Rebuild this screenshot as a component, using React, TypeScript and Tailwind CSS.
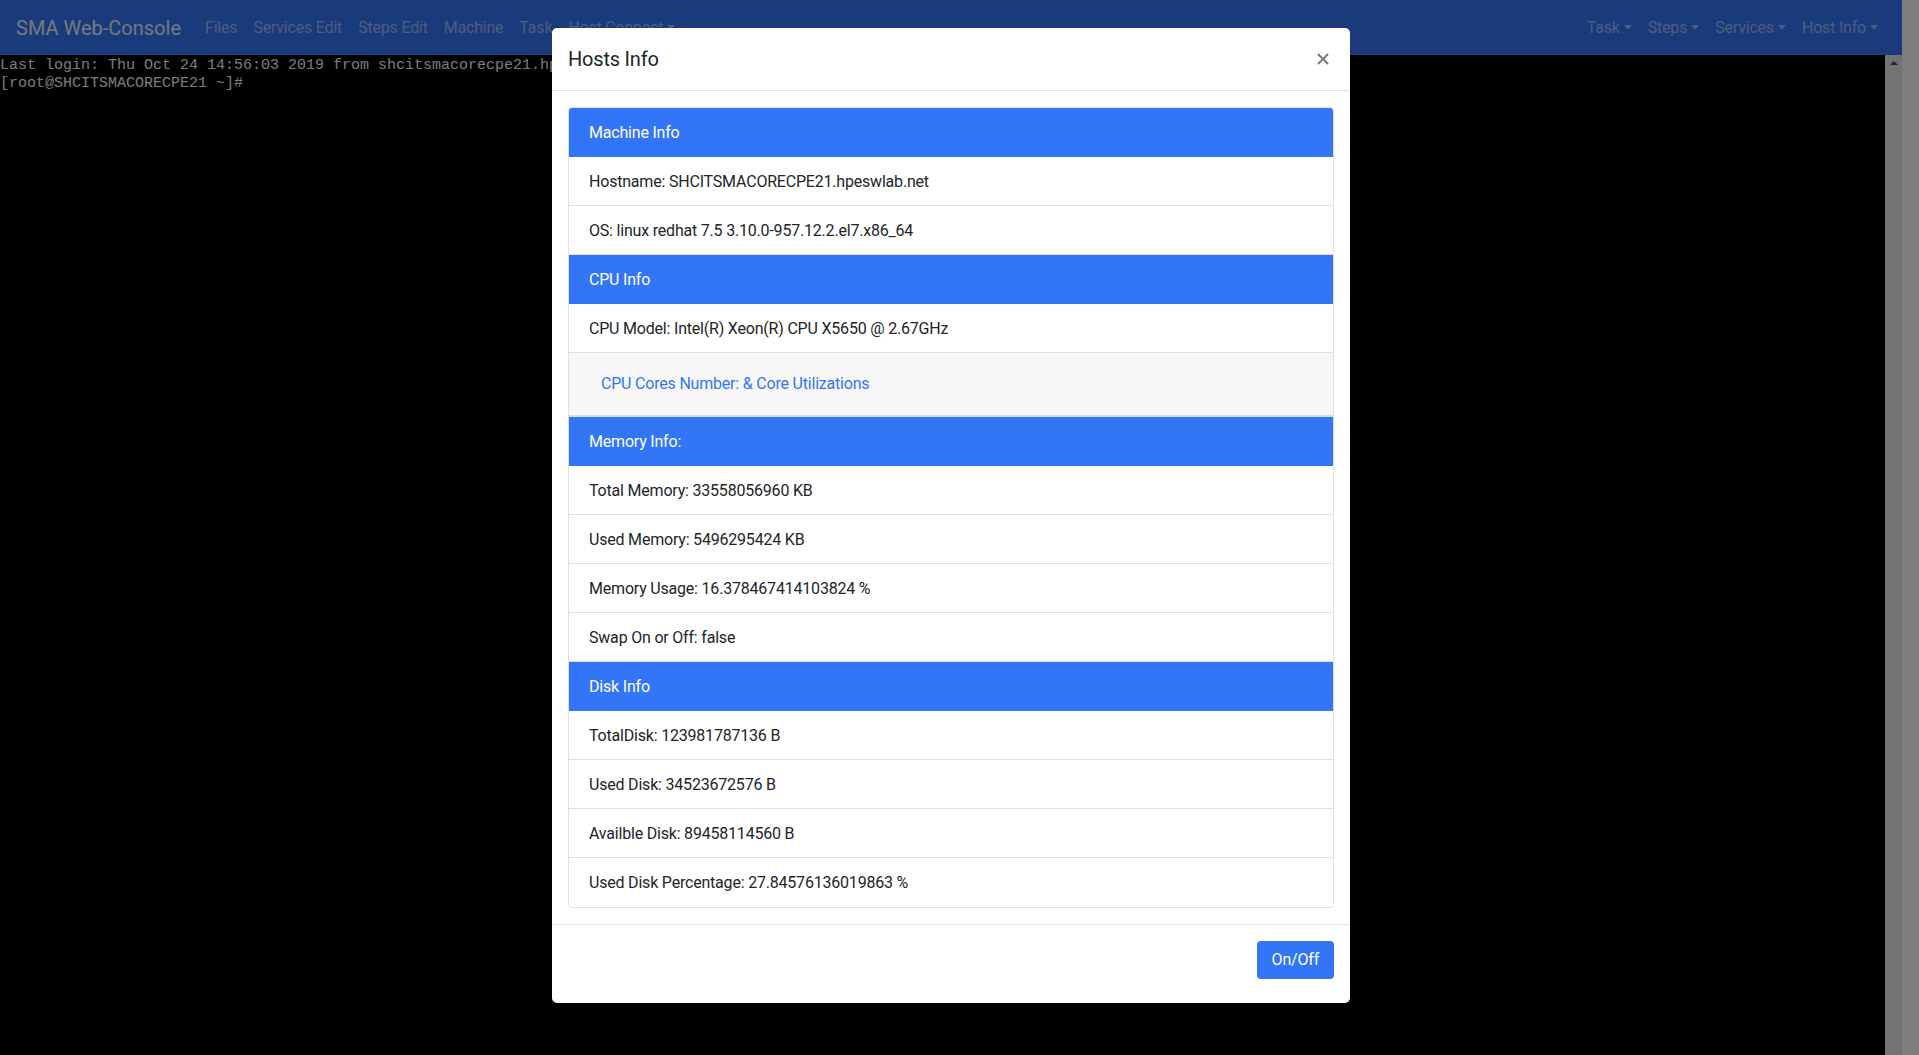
import React from 'react';
import { X } from 'lucide-react';

const leftLinks = ['Files', 'Services Edit', 'Steps Edit', 'Machine', 'Task'];
const rightMenus = ['Task', 'Steps', 'Services', 'Host Info'];

type Row = { text: string; head?: boolean; cores?: boolean };

const rows: Row[] = [
  { text: 'Machine Info', head: true },
  { text: 'Hostname: SHCITSMACORECPE21.hpeswlab.net' },
  { text: 'OS: linux redhat 7.5 3.10.0-957.12.2.el7.x86_64' },
  { text: 'CPU Info', head: true },
  { text: 'CPU Model: Intel(R) Xeon(R) CPU X5650 @ 2.67GHz' },
  { text: 'CPU Cores Number: & Core Utilizations', cores: true },
  { text: 'Memory Info:', head: true },
  { text: 'Total Memory: 33558056960 KB' },
  { text: 'Used Memory: 5496295424 KB' },
  { text: 'Memory Usage: 16.378467414103824 %' },
  { text: 'Swap On or Off: false' },
  { text: 'Disk Info', head: true },
  { text: 'TotalDisk: 123981787136 B' },
  { text: 'Used Disk: 34523672576 B' },
  { text: 'Availble Disk: 89458114560 B' },
  { text: 'Used Disk Percentage: 27.84576136019863 %' },
];

const Caret = () => (
  <span className="inline-block ml-[4px] align-[3px] border-t-[5px] border-x-[4px] border-x-transparent border-t-current" />
);

const App = () => {
  return (
    <div className="relative w-[1919px] h-[1055px] overflow-hidden bg-black flex font-['Segoe_UI',Roboto,'Noto_Sans',sans-serif] text-[16px] tracking-[-0.2px]">
      {/* page */}
      <div className="w-[1902px] h-full flex flex-col">
        <nav className="h-[55px] bg-[#3275f7] flex items-center px-[16px]">
          <span className="text-[20px] text-white/90 mr-[16px] leading-[30px] tracking-normal">SMA Web-Console</span>
          <div className="flex">
            {leftLinks.map((l) => (
              <span key={l} className="px-[8px] text-white/50 leading-[24px]">{l}</span>
            ))}
            <span className="px-[8px] text-white/50 leading-[24px]">Host Connect<Caret /></span>
          </div>
          <div className="ml-auto flex">
            {rightMenus.map((l) => (
              <span key={l} className="px-[8px] text-white/50 leading-[24px]">{l}<Caret /></span>
            ))}
          </div>
        </nav>
        <div className="flex-1 flex">
          <div className="flex-1 pt-[2px] font-['Liberation_Mono',monospace] tracking-normal text-[15px] leading-[18px] text-[#f5f5f5] whitespace-pre">
            <div>Last login: Thu Oct 24 14:56:03 2019 from shcitsmacorecpe21.hpeswlab.net</div>
            <div>[root@SHCITSMACORECPE21 ~]#</div>
          </div>
          <div className="w-[17px] bg-[#e6e6e6] flex justify-center pt-[6px]">
            <span className="border-b-[4px] border-x-[4px] border-x-transparent border-b-[#505050] h-0" />
          </div>
        </div>
      </div>
      <div className="w-[17px] h-full bg-[#fdfdfd]" />

      {/* backdrop */}
      <div className="absolute inset-0 bg-black/50" />

      {/* modal */}
      <div className="absolute left-[552px] top-[28px] w-[798px] bg-white rounded-[5px] text-[#212529]">
        <div className="h-[63px] px-[16px] flex items-center justify-between border-b border-[#dee2e6]">
          <h5 className="text-[20px] leading-[30px]">Hosts Info</h5>
          <X size={18} strokeWidth={2.6} className="text-[#7a7a7a] mr-[2px]" />
        </div>
        <div className="p-[16px]">
          <div className="border border-[#dfdfdf] rounded-[4px] overflow-hidden">
            {rows.map((r, i) =>
              r.cores ? (
                <div key={i} className="h-[64px] bg-[#f7f7f7] border-b-2 border-[#d5dde8] flex items-center px-[20px]">
                  <span className="px-[12px] text-[#3275f7] leading-[24px]">{r.text}</span>
                </div>
              ) : (
                <div
                  key={i}
                  className={
                    r.head
                      ? 'h-[49px] bg-[#3275f7] text-white flex items-center px-[20px] pt-[1px]'
                      : 'h-[49px] bg-white flex items-center px-[20px] pt-[1px] border-b border-[#dfdfdf] last:border-b-0'
                  }
                >
                  {r.text}
                </div>
              )
            )}
          </div>
        </div>
        <div className="border-t border-[#dee2e6] h-[79px] flex items-start justify-end px-[16px] pt-[16px]">
          <button className="h-[38px] px-[15px] bg-[#3275f7] text-white rounded-[4px] leading-[24px]">On/Off</button>
        </div>
      </div>
    </div>
  );
};

export default App;
